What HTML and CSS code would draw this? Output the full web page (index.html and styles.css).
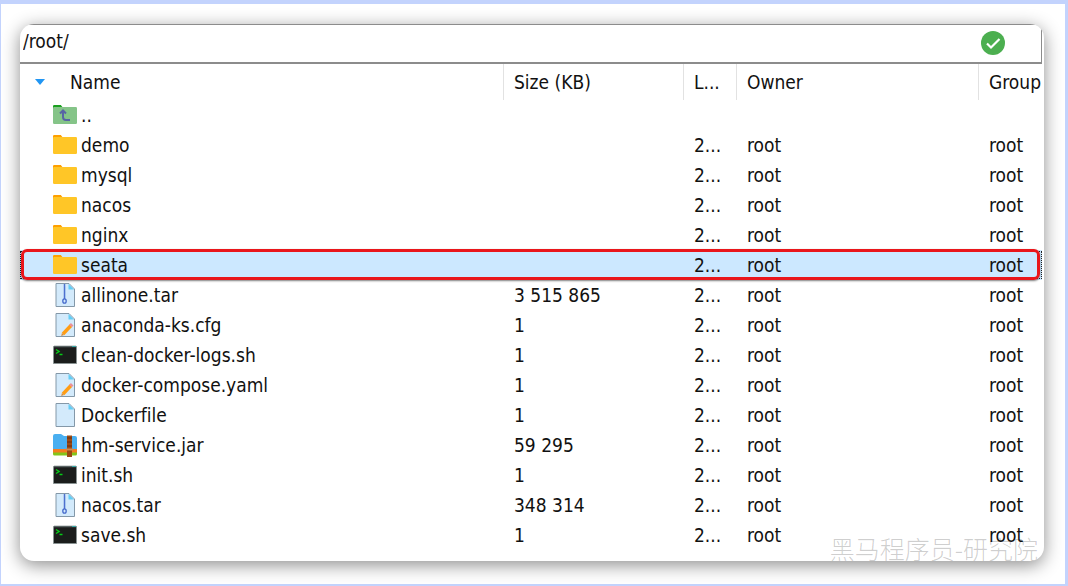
FILE: index.html
```html
<!DOCTYPE html>
<html lang="en">
<head>
<meta charset="utf-8">
<title>/root/</title>
<link rel="stylesheet" href="styles.css">
</head>
<body>
<svg class="defs" aria-hidden="true">
  <symbol id="folder" viewBox="0 0 24 22"><path d="M0 2.200Q0 1 1.200 1h6.600l2 2.500H11V9H0z" fill="#ffa000"/><rect y="3" width="24" height="17" rx="1.200" fill="#ffc627"/></symbol>
  <symbol id="up" viewBox="0 0 24 22"><path d="M0 2.200Q0 1 1.200 1h6.600l2 2.500H11V9H0z" fill="#1aa01f"/><rect y="3" width="24" height="17" rx="1.200" fill="#85c488"/><path d="M10 7v6q0 3 3 3h4M7 9.500L10 6.500l3 3" fill="none" stroke="#5864a5" stroke-width="2"/></symbol>
  <symbol id="file" viewBox="0 0 24 24"><path d="M3 .5h13L21.500 6v17.500H3z" fill="#d3eafb" stroke="#8498a8"/><path d="M15.500 1L21 6.500h-5.500z" fill="#62cdf5"/></symbol>
  <symbol id="tar" viewBox="0 0 24 24"><use href="#file"/><path d="M11.500 1v15" stroke="#4d70ce" stroke-width="1.500"/><path d="M12.500 3v12" stroke="#a8c7ef"/><ellipse cx="11.500" cy="18" rx="1.700" ry="2.200" fill="none" stroke="#4569cb" stroke-width="1.300"/></symbol>
  <symbol id="edit" viewBox="0 0 24 24"><use href="#file"/><path d="M10 21l8-8.500" stroke="#ff9d14" stroke-width="3.500"/><path d="M17.500 13l1.700-1.800" stroke="#e9919a" stroke-width="3.500"/><path d="M8.200 23l.7-3 2.200 2z" fill="#d98b37"/></symbol>
  <symbol id="shell" viewBox="0 0 24 20"><path d="M.5 1.500h23v17H.5z" fill="#1b1d1c" stroke="#899292"/><path d="M1 1.500h22" stroke="#5a6464" stroke-width="1.500"/><path d="M19 1.500h4" stroke="#38aaa8"/><path d="M3 4.500l3 2-3 2M6.500 9.500h3" fill="none" stroke="#05cc16" stroke-width="1.500"/></symbol>
  <symbol id="jar" viewBox="0 0 24 24"><path d="M0 15h24v6q0 1.500-1.500 1.500h-21Q0 22.500 0 21z" fill="#83c51b"/><path d="M0 13h24v6.500H0z" fill="#f47d20"/><path d="M0 3Q0 1 2 1h6l3 2h11q2 0 2 2v11H0z" fill="#4aaff0"/><path d="M14 2.500h5V24h-5z" fill="#9b4a13"/><path d="M14 5h5M14 9h5M14 13h5" stroke="#642b11"/><path d="M13 16.500h7" stroke="#c98b51" stroke-width="2"/></symbol>
</svg>
<main class="frame">
  <section class="panel">
    <div class="pathbar">
      <input class="path" type="text" value="/root/" aria-label="Remote path">
      <svg class="ok" viewBox="0 0 24 24" role="img" aria-label="Connected"><circle cx="12" cy="12" r="12" fill="#4caf50"/><path d="M6 12.500l4 4 8.500-8.500" fill="none" stroke="#fff" stroke-width="2.200"/></svg>
    </div>
    <table class="files">
      <colgroup><col><col class="col-size"><col class="col-last"><col class="col-owner"><col class="col-group"></colgroup>
      <thead>
        <tr><th scope="col"><button class="sort" type="button"><svg class="arrow" viewBox="0 0 10 6"><path d="M0 0h10L5 6z" fill="#2196f3"/></svg>Name</button></th><th scope="col">Size (KB)</th><th scope="col">L...</th><th scope="col">Owner</th><th scope="col">Group</th></tr>
      </thead>
      <tbody>
        <tr><td><span class="entry"><svg class="icon"><use href="#up"/></svg>..</span></td><td></td><td></td><td></td><td></td></tr>
        <tr><td><span class="entry"><svg class="icon"><use href="#folder"/></svg>demo</span></td><td></td><td>2...</td><td>root</td><td>root</td></tr>
        <tr><td><span class="entry"><svg class="icon"><use href="#folder"/></svg>mysql</span></td><td></td><td>2...</td><td>root</td><td>root</td></tr>
        <tr><td><span class="entry"><svg class="icon"><use href="#folder"/></svg>nacos</span></td><td></td><td>2...</td><td>root</td><td>root</td></tr>
        <tr><td><span class="entry"><svg class="icon"><use href="#folder"/></svg>nginx</span></td><td></td><td>2...</td><td>root</td><td>root</td></tr>
        <tr class="selected"><td><span class="entry"><svg class="icon"><use href="#folder"/></svg>seata</span></td><td></td><td>2...</td><td>root</td><td>root</td></tr>
        <tr><td><span class="entry"><svg class="icon"><use href="#tar"/></svg>allinone.tar</span></td><td>3 515 865</td><td>2...</td><td>root</td><td>root</td></tr>
        <tr><td><span class="entry"><svg class="icon"><use href="#edit"/></svg>anaconda-ks.cfg</span></td><td>1</td><td>2...</td><td>root</td><td>root</td></tr>
        <tr><td><span class="entry"><svg class="icon"><use href="#shell"/></svg>clean-docker-logs.sh</span></td><td>1</td><td>2...</td><td>root</td><td>root</td></tr>
        <tr><td><span class="entry"><svg class="icon"><use href="#edit"/></svg>docker-compose.yaml</span></td><td>1</td><td>2...</td><td>root</td><td>root</td></tr>
        <tr><td><span class="entry"><svg class="icon"><use href="#file"/></svg>Dockerfile</span></td><td>1</td><td>2...</td><td>root</td><td>root</td></tr>
        <tr><td><span class="entry"><svg class="icon"><use href="#jar"/></svg>hm-service.jar</span></td><td>59 295</td><td>2...</td><td>root</td><td>root</td></tr>
        <tr><td><span class="entry"><svg class="icon"><use href="#shell"/></svg>init.sh</span></td><td>1</td><td>2...</td><td>root</td><td>root</td></tr>
        <tr><td><span class="entry"><svg class="icon"><use href="#tar"/></svg>nacos.tar</span></td><td>348 314</td><td>2...</td><td>root</td><td>root</td></tr>
        <tr><td><span class="entry"><svg class="icon"><use href="#shell"/></svg>save.sh</span></td><td>1</td><td>2...</td><td>root</td><td>root</td></tr>
      </tbody>
    </table>
    <span class="watermark" lang="zh">黑马程序员-研究院</span>
  </section>
</main>
</body>
</html>
```
FILE: styles.css
```css
* { box-sizing: border-box; }
body {
  margin: 0;
  background: #fff;
  color: #111;
  font: 19px/30px "DejaVu Sans Condensed", "Noto Sans", sans-serif;
  font-variant-ligatures: none;
}
.defs { position: absolute; width: 0; height: 0; }
.frame {
  min-height: 100vh;
  padding: 20px 21px 22px 19px;
  border: solid #c3d3fd;
  border-width: 4px 3px 2px 1px;
}
.panel {
  position: relative;
  overflow: hidden;
  padding-bottom: 11px;
  background: #fff;
  border-radius: 14px;
  box-shadow: 0 4px 18px rgba(0, 0, 0, .45);
}
.pathbar {
  display: flex;
  align-items: flex-start;
  height: 40px;
  margin-right: 2px;
  padding: 6px 36px 0 0;
  border: solid #8c8c8c;
  border-width: 1px 1px 2px 0;
}
.path {
  flex: 1;
  min-width: 0;
  height: 24px;
  padding: 0 3px 4px;
  border: 0;
  outline: 0;
  background: transparent;
  color: inherit;
  font: inherit;
}
.ok { width: 24px; height: 24px; }
.files {
  width: 100%;
  table-layout: fixed;
  border-collapse: separate;
  border-spacing: 0;
}
.col-size { width: 180px; }
.col-last { width: 53px; }
.col-owner { width: 242px; }
.col-group { width: 66px; }
.files th,
.files td {
  height: 30px;
  padding: 0 0 0 10px;
  font-weight: 400;
  text-align: left;
  white-space: nowrap;
}
.files th { height: 36px; border-left: 1px solid #e2e2e2; }
.files th:first-child { padding-left: 15px; border-left: 0; }
.files td { padding-left: 11px; }
.files td:first-child { padding-left: 33px; }
.sort {
  display: flex;
  align-items: center;
  gap: 25px;
  padding: 0;
  border: 0;
  background: none;
  color: inherit;
  font: inherit;
}
.arrow { width: 10px; height: 6px; }
.entry { display: flex; align-items: center; gap: 4px; height: 30px; }
.icon { flex: none; width: 24px; height: 24px; }
.selected { position: relative; }
.selected td { background: #cce8ff; }
.selected td:last-child { background: linear-gradient(to left, #fff 2px, #cce8ff 2px); }
.selected td:first-child::before,
.selected td:first-child::after {
  content: "";
  position: absolute;
  pointer-events: none;
}
.selected td:first-child::before { inset: 1px 2px 1px 0; border: 1px dotted #222; }
.selected td:first-child::after {
  inset: -1px 4px 0 1px;
  border: 3px solid #e9161b;
  border-radius: 6px;
  box-shadow: 0 1px 2px rgba(0, 0, 0, .5);
}
.watermark {
  position: absolute;
  right: 6px;
  bottom: 0;
  color: rgba(0, 0, 0, .2);
  font: 300 25px/25px "Noto Sans CJK SC", sans-serif;
  pointer-events: none;
}
```
